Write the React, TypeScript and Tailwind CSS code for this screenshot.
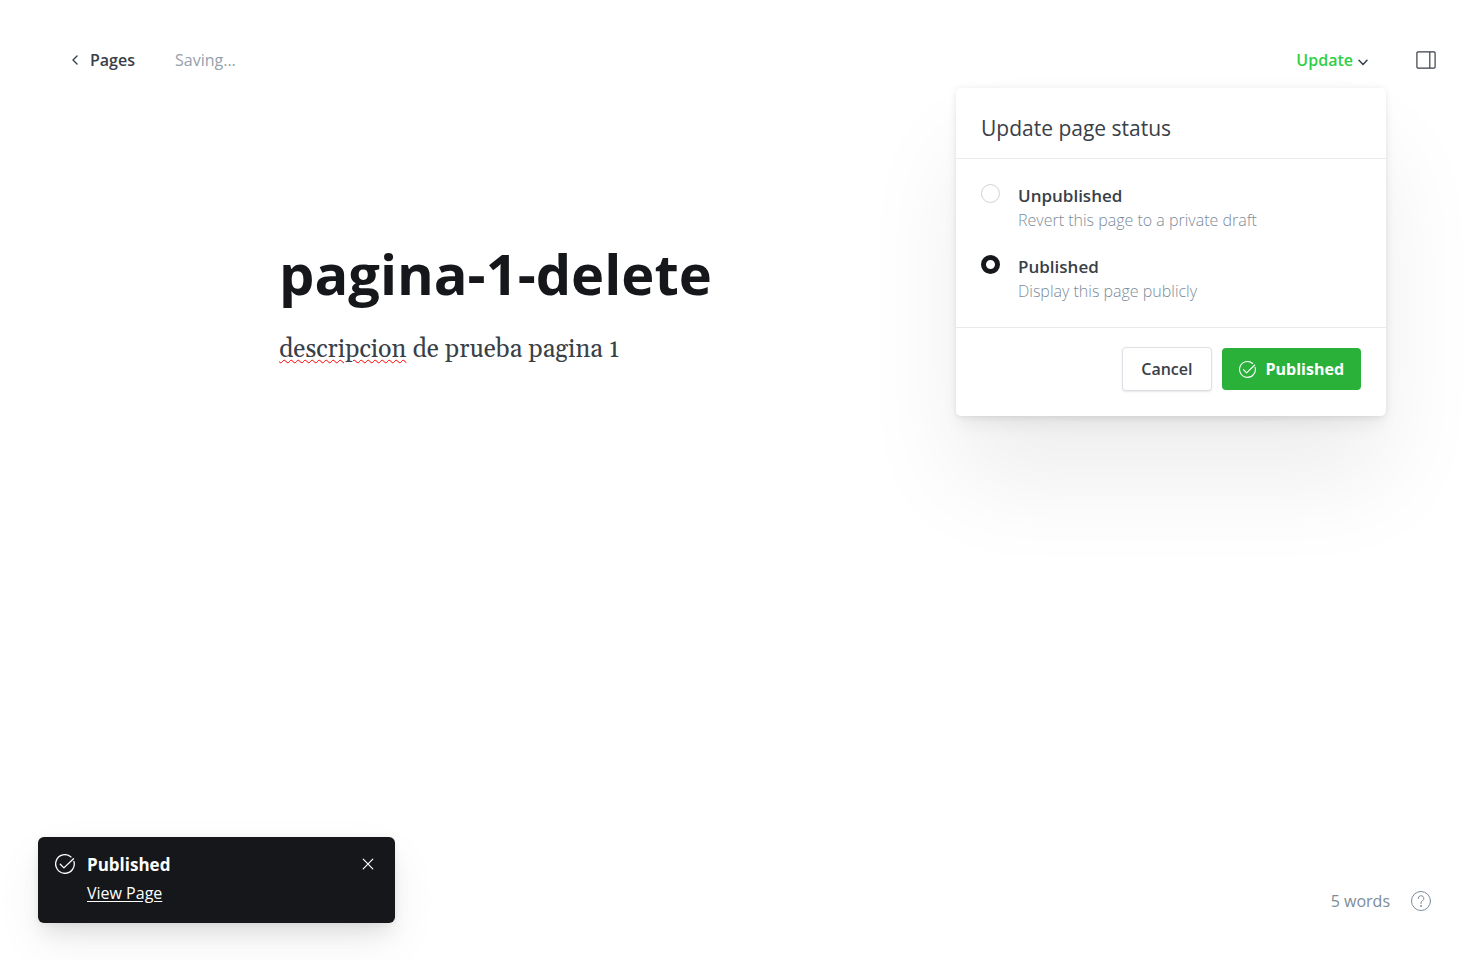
import { useState } from "react";

function ChevronLeft() {
  return (
    <svg viewBox="0 0 6 10" className="h-[10px] w-[6px]" fill="none" stroke="#394047" strokeWidth="1.4" strokeLinecap="round" strokeLinejoin="round" aria-hidden="true">
      <path d="M5 1 1 5l4 4" />
    </svg>
  );
}

function ChevronDown() {
  return (
    <svg viewBox="0 0 10 7" className="mt-1 h-[7px] w-[10px]" fill="none" stroke="#394047" strokeWidth="1.5" strokeLinecap="round" strokeLinejoin="round" aria-hidden="true">
      <path d="m1 1.2 4 4.2 4-4.2" />
    </svg>
  );
}

function SidebarIcon() {
  return (
    <svg viewBox="0 0 20 18" className="h-[18px] w-5" fill="none" stroke="#394047" strokeWidth="1.2" aria-hidden="true">
      <rect x="0.9" y="0.9" width="18.2" height="16.2" rx="1" />
      <path d="M13.8 1v16" />
    </svg>
  );
}

function CheckCircle({ className }: { className: string }) {
  return (
    <svg viewBox="0 0 20 20" className={className} fill="none" stroke="#ffffff" strokeWidth="1.3" strokeLinecap="round" strokeLinejoin="round" aria-hidden="true">
      <path d="M18.9 7.4A9.3 9.3 0 1 1 16 2.9" />
      <path d="m5.3 10.2 3.6 3.7 9.6-9.2" />
    </svg>
  );
}

function CloseIcon() {
  return (
    <svg viewBox="0 0 12 12" className="h-3 w-3" fill="none" stroke="#ffffff" strokeWidth="1.2" strokeLinecap="round" aria-hidden="true">
      <path d="m1.2 1.2 9.6 9.6M10.8 1.2 1.2 10.8" />
    </svg>
  );
}

function HelpIcon() {
  return (
    <svg viewBox="0 0 20 20" className="h-5 w-5" fill="none" stroke="#7c8b9a" strokeWidth="1" strokeLinecap="round" strokeLinejoin="round" aria-hidden="true">
      <circle cx="10" cy="10" r="9.5" />
      <path d="M7.2 7.5a2.8 2.8 0 1 1 4.2 2.4c-.9.5-1.4 1-1.4 2v.6" />
      <circle cx="10" cy="15" r="0.4" fill="#7c8b9a" />
    </svg>
  );
}

type Status = "unpublished" | "published";

const options: { value: Status; label: string; hint: string }[] = [
  { value: "unpublished", label: "Unpublished", hint: "Revert this page to a private draft" },
  { value: "published", label: "Published", hint: "Display this page publicly" },
];

function StatusMenu() {
  const [status, setStatus] = useState<Status>("published");
  return (
    <form
      className="absolute top-full right-[-18px] mt-3 w-[430px] rounded-[5px] bg-white shadow-[0_0_7px_rgba(0,0,0,0.08),0_3px_4px_rgba(0,0,0,0.02),0_13px_18px_-4px_rgba(0,0,0,0.06),0_65px_100px_rgba(0,0,0,0.07)]"
      onSubmit={(e) => e.preventDefault()}
    >
      <h2 id="status-title" className="border-b border-[#e8ebed] px-[25px] pt-6 pb-[14px] text-[21px] leading-8 font-normal text-[#394047]">
        Update page status
      </h2>
      <div role="radiogroup" aria-labelledby="status-title" className="flex flex-col gap-[22px] border-b border-[#e8ebed] px-[25px] py-6">
        {options.map((o) => (
          <div key={o.value} className="flex gap-[18px]">
            <input
              id={o.value}
              type="radio"
              name="status"
              checked={status === o.value}
              onChange={() => setStatus(o.value)}
              aria-describedby={o.value + "-hint"}
              className="mt-px h-[19px] w-[19px] shrink-0 appearance-none rounded-full border border-[#ced4d9] bg-white checked:border-[5px] checked:border-[#15171a]"
            />
            <div>
              <label htmlFor={o.value} className="block text-[17px] leading-[26px] font-semibold text-[#394047]">
                {o.label}
              </label>
              <p id={o.value + "-hint"} className="text-[16px] leading-[23px] font-light text-[#7c8b9a]">
                {o.hint}
              </p>
            </div>
          </div>
        ))}
      </div>
      <div className="flex items-center justify-end gap-[10px] px-[25px] pt-[19px] pb-[25px]">
        <button type="button" className="h-11 rounded-[4px] border border-[#dde1e5] bg-white px-[18px] text-[16px] font-semibold text-[#394047] shadow-[0_1px_2px_rgba(0,0,0,0.1)]">
          Cancel
        </button>
        <button type="submit" className="flex h-[42px] items-center gap-[10px] rounded-[4px] bg-[#2ab13a] px-[17px] text-[16px] font-bold text-white">
          <CheckCircle className="h-[17px] w-[17px]" />
          Published
        </button>
      </div>
    </form>
  );
}

export default function App() {
  return (
    <div className="flex min-h-screen flex-col bg-white font-['Open_Sans','Noto_Sans',sans-serif] text-[#394047]">
      <header className="flex items-center justify-between pt-11 pr-[47px] pl-[72px]">
        <div className="flex h-8 items-center gap-10">
          <a href="#pages" className="flex items-center gap-3 text-[16px] leading-6 font-semibold">
            <ChevronLeft />
            Pages
          </a>
          <span className="text-[16px] leading-6 text-[#95a1ad]">Saving...</span>
        </div>
        <div className="flex items-center gap-12">
          <div className="relative z-10">
            <button type="button" aria-expanded="true" className="flex h-8 items-center gap-[5px] text-[16px] font-semibold text-[#30cf43]">
              Update
              <ChevronDown />
            </button>
            <StatusMenu />
          </div>
          <button type="button" aria-label="Settings">
            <SidebarIcon />
          </button>
        </div>
      </header>

      <main className="mx-auto w-full max-w-[925px] flex-1 pt-40">
        <textarea
          aria-label="Page title"
          rows={1}
          spellCheck={false}
          defaultValue="pagina-1-delete"
          className="block h-[72px] w-full resize-none overflow-hidden text-[56px] leading-[74px] font-bold text-[#15171a] outline-none"
        />
        <p className="mt-6 font-['Georgia','Gelasio','Liberation_Serif',serif] text-[25px] leading-9">
          <span className="underline decoration-[#ff0000] decoration-wavy decoration-1 underline-offset-2">descripcion</span> de prueba pagina 1
        </p>
      </main>

      <footer className="flex items-end justify-between pr-[52px] pb-[37px] pl-[38px]">
        <div
          role="status"
          className="flex h-[86px] w-[357px] items-start rounded-[6px] bg-[#15171a] px-[17px] pt-[14px] text-white shadow-[0_0_7px_rgba(0,0,0,0.06),0_13px_20px_-4px_rgba(0,0,0,0.09),0_20px_50px_rgba(0,0,0,0.06)]"
        >
          <CheckCircle className="mt-[3px] h-5 w-5" />
          <div className="ml-3 flex-1">
            <p className="text-[17px] leading-7 font-bold">Published</p>
            <a href="#view" className="block text-[16px] leading-7 underline underline-offset-2">
              View Page
            </a>
          </div>
          <button type="button" aria-label="Close" className="mt-[7px] mr-1">
            <CloseIcon />
          </button>
        </div>
        <div className="mb-2 flex items-center gap-[21px]">
          <span className="text-[16px] leading-7 text-[#7c8b9a]">5 words</span>
          <button type="button" aria-label="Help">
            <HelpIcon />
          </button>
        </div>
      </footer>
    </div>
  );
}
